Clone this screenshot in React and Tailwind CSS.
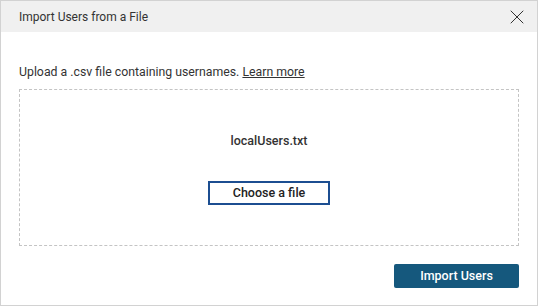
import { X } from "lucide-react";

export default function App() {
  return (
    <div className="w-[538px] h-[306px] bg-white border border-[#d2d2d2] flex flex-col text-[#333333] font-['Roboto','Liberation_Sans',Arial,sans-serif]">
      <div className="h-[31px] shrink-0 bg-[#f0f0f0] flex items-center justify-between pl-[18px] pr-[8px]">
        <span className="text-[12px]">Import Users from a File</span>
        <button className="w-[24px] h-[24px] grid place-items-center text-[#333333]">
          <X size={24} strokeWidth={1} />
        </button>
      </div>
      <div className="flex-1 flex flex-col px-[18px]">
        <p className="mt-[32px] text-[12.3px] leading-[16px]">
          Upload a .csv file containing usernames.{" "}
          <a href="#" className="underline">Learn more</a>
        </p>
        <div className="mt-[9px] h-[157px] border border-dashed border-[#c4c4c4] flex flex-col items-center">
          <div className="mt-[43px] text-[12.5px] font-medium leading-[16px]">localUsers.txt</div>
          <button className="mt-[32px] w-[122px] h-[24px] border-2 border-[#1c4e91] text-[12.5px] font-medium leading-none text-[#222222]">
            Choose a file
          </button>
        </div>
        <div className="mt-[18px] flex justify-end">
          <button className="w-[125px] h-[24px] rounded-[2px] bg-[#15587d] text-white text-[12.5px] font-medium">
            Import Users
          </button>
        </div>
      </div>
    </div>
  );
}
